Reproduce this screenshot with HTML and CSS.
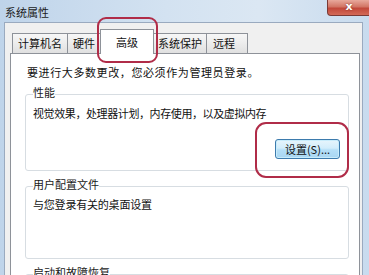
FILE: index.html
```html
<!DOCTYPE html>
<html lang="zh-CN">
<head>
<meta charset="utf-8">
<title>系统属性</title>
<link rel="stylesheet" href="styles.css">
</head>
<body>
<div class="window">
  <div class="titlebar">
    <span class="title">系统属性</span>
    <div class="close"><span>x</span></div>
  </div>
  <div class="client">
    <div class="tabs">
      <div class="tab t1">计算机名</div>
      <div class="tab t2">硬件</div>
      <div class="tab active">高级</div>
      <div class="tab t4">系统保护</div>
      <div class="tab t5">远程</div>
    </div>
    <div class="panel">
      <p class="intro">要进行大多数更改，您必须作为管理员登录。</p>
      <fieldset class="group g1">
        <legend>性能</legend>
        <p class="desc">视觉效果，处理器计划，内存使用，以及虚拟内存</p>
        <div class="actions"><button class="btn">设置(S)...</button></div>
      </fieldset>
      <fieldset class="group g2">
        <legend>用户配置文件</legend>
        <p class="desc">与您登录有关的桌面设置</p>
      </fieldset>
      <fieldset class="group g3">
        <legend>启动和故障恢复</legend>
      </fieldset>
    </div>
  </div>
  <div class="mark mark-tab"></div>
  <div class="mark mark-btn"></div>
</div>
</body>
</html>
```

FILE: styles.css
```css
html, body {
  margin: 0;
  padding: 0;
}
body {
  width: 369px;
  height: 275px;
  overflow: hidden;
  font-family: "Noto Sans CJK SC", "Liberation Sans", sans-serif;
  font-size: 11px;
  color: #111;
  background: linear-gradient(90deg, #bfd4ea 0%, #d3e2f1 45%, #dbe7f3 70%, #c8dbee 100%);
}
.window {
  position: relative;
  width: 369px;
  height: 275px;
  overflow: hidden;
}
.titlebar {
  height: 22px;
  display: flex;
  align-items: flex-start;
  padding-left: 5px;
}
.title {
  line-height: 14px;
  margin-top: 5px;
  color: #1b1b1b;
  font-size: 11px;
}
.close {
  margin-left: auto;
  margin-right: -6px;
  width: 48px;
  height: 16px;
  box-sizing: border-box;
  border: 1px solid #7a3a36;
  border-top: none;
  border-radius: 0 0 4px 4px;
  background: linear-gradient(180deg, #e8a99c 0%, #d27565 45%, #c2483a 55%, #d36a58 100%);
  display: flex;
  justify-content: center;
  padding-right: 4px;
}
.close span {
  color: #fff;
  font-family: "DejaVu Sans", sans-serif;
  font-weight: bold;
  font-size: 11px;
  line-height: 14px;
  text-shadow: 0 0 2px #7a2a20;
}
.client {
  box-sizing: border-box;
  margin: 0 6px 0 4px;
  height: 253px;
  border: 1px solid #9aaabf;
  border-bottom: none;
  background: #f0f0f0;
  padding: 6px 2px 0 5px;
}
.tabs {
  display: flex;
  align-items: flex-start;
  height: 25px;
  margin-bottom: -1px;
  padding-left: 2px;
}
.tab {
  box-sizing: border-box;
  height: 20px;
  margin-top: 4px;
  border: 1px solid #8e9299;
  border-bottom: none;
  background: linear-gradient(180deg, #f7f7f7 0%, #ececec 50%, #e0e0e0 100%);
  line-height: 19px;
  padding: 0 5px;
  white-space: nowrap;
}
.tab + .tab {
  margin-left: -1px;
}
.t4 {
  padding: 0 4px;
}
.t5 {
  padding: 0 12px 0 6px;
}
.tab.active {
  position: relative;
  z-index: 1;
  height: 25px;
  margin-top: 0;
  background: #fff;
  padding: 0 15px;
  line-height: 25px;
}
.panel {
  box-sizing: border-box;
  height: 222px;
  overflow: hidden;
  background: #fff;
  border: 1px solid #8e9299;
  border-bottom: none;
  padding: 11px 10px 0 14px;
}
.intro {
  margin: 0 0 6px 2px;
  line-height: 14px;
  letter-spacing: 0.6px;
}
.group {
  margin: 0;
  border: 1px solid #d7dde2;
  border-radius: 3px;
  padding: 2px 8px 0 7px;
}
.group legend {
  padding: 0 0 4px;
  line-height: 14px;
  color: #1a1a1a;
}
.desc {
  margin: 0;
  line-height: 14px;
}
.g1 {
  padding-top: 3px;
  padding-bottom: 11px;
}
.g1 .desc {
  letter-spacing: -0.4px;
}
.g2 .desc {
  letter-spacing: -0.2px;
}
.actions {
  display: flex;
  justify-content: flex-end;
  margin-top: 19px;
}
.btn {
  box-sizing: border-box;
  width: 65px;
  height: 20px;
  font-family: inherit;
  font-size: 11px;
  line-height: 16px;
  padding: 0;
  color: #111;
  border: 1px solid #3d7bad;
  border-radius: 3px;
  background: linear-gradient(180deg, #e7f5fc 0%, #d2edfb 45%, #b5dff7 55%, #a8d6f2 100%);
  box-shadow: inset 0 0 0 1px #c8ecfb;
}
.g2 {
  margin-top: 6px;
  height: 82px;
  box-sizing: border-box;
}
.g3 {
  margin-top: 6px;
  height: 40px;
  box-sizing: border-box;
}
.mark {
  position: absolute;
  box-sizing: border-box;
  border: 2px solid #b02c48;
  border-radius: 9px;
}
.mark-tab {
  left: 97px;
  top: 17px;
  width: 61px;
  height: 46px;
}
.mark-btn {
  left: 255px;
  top: 122px;
  width: 94px;
  height: 56px;
  border-radius: 11px;
}
```
